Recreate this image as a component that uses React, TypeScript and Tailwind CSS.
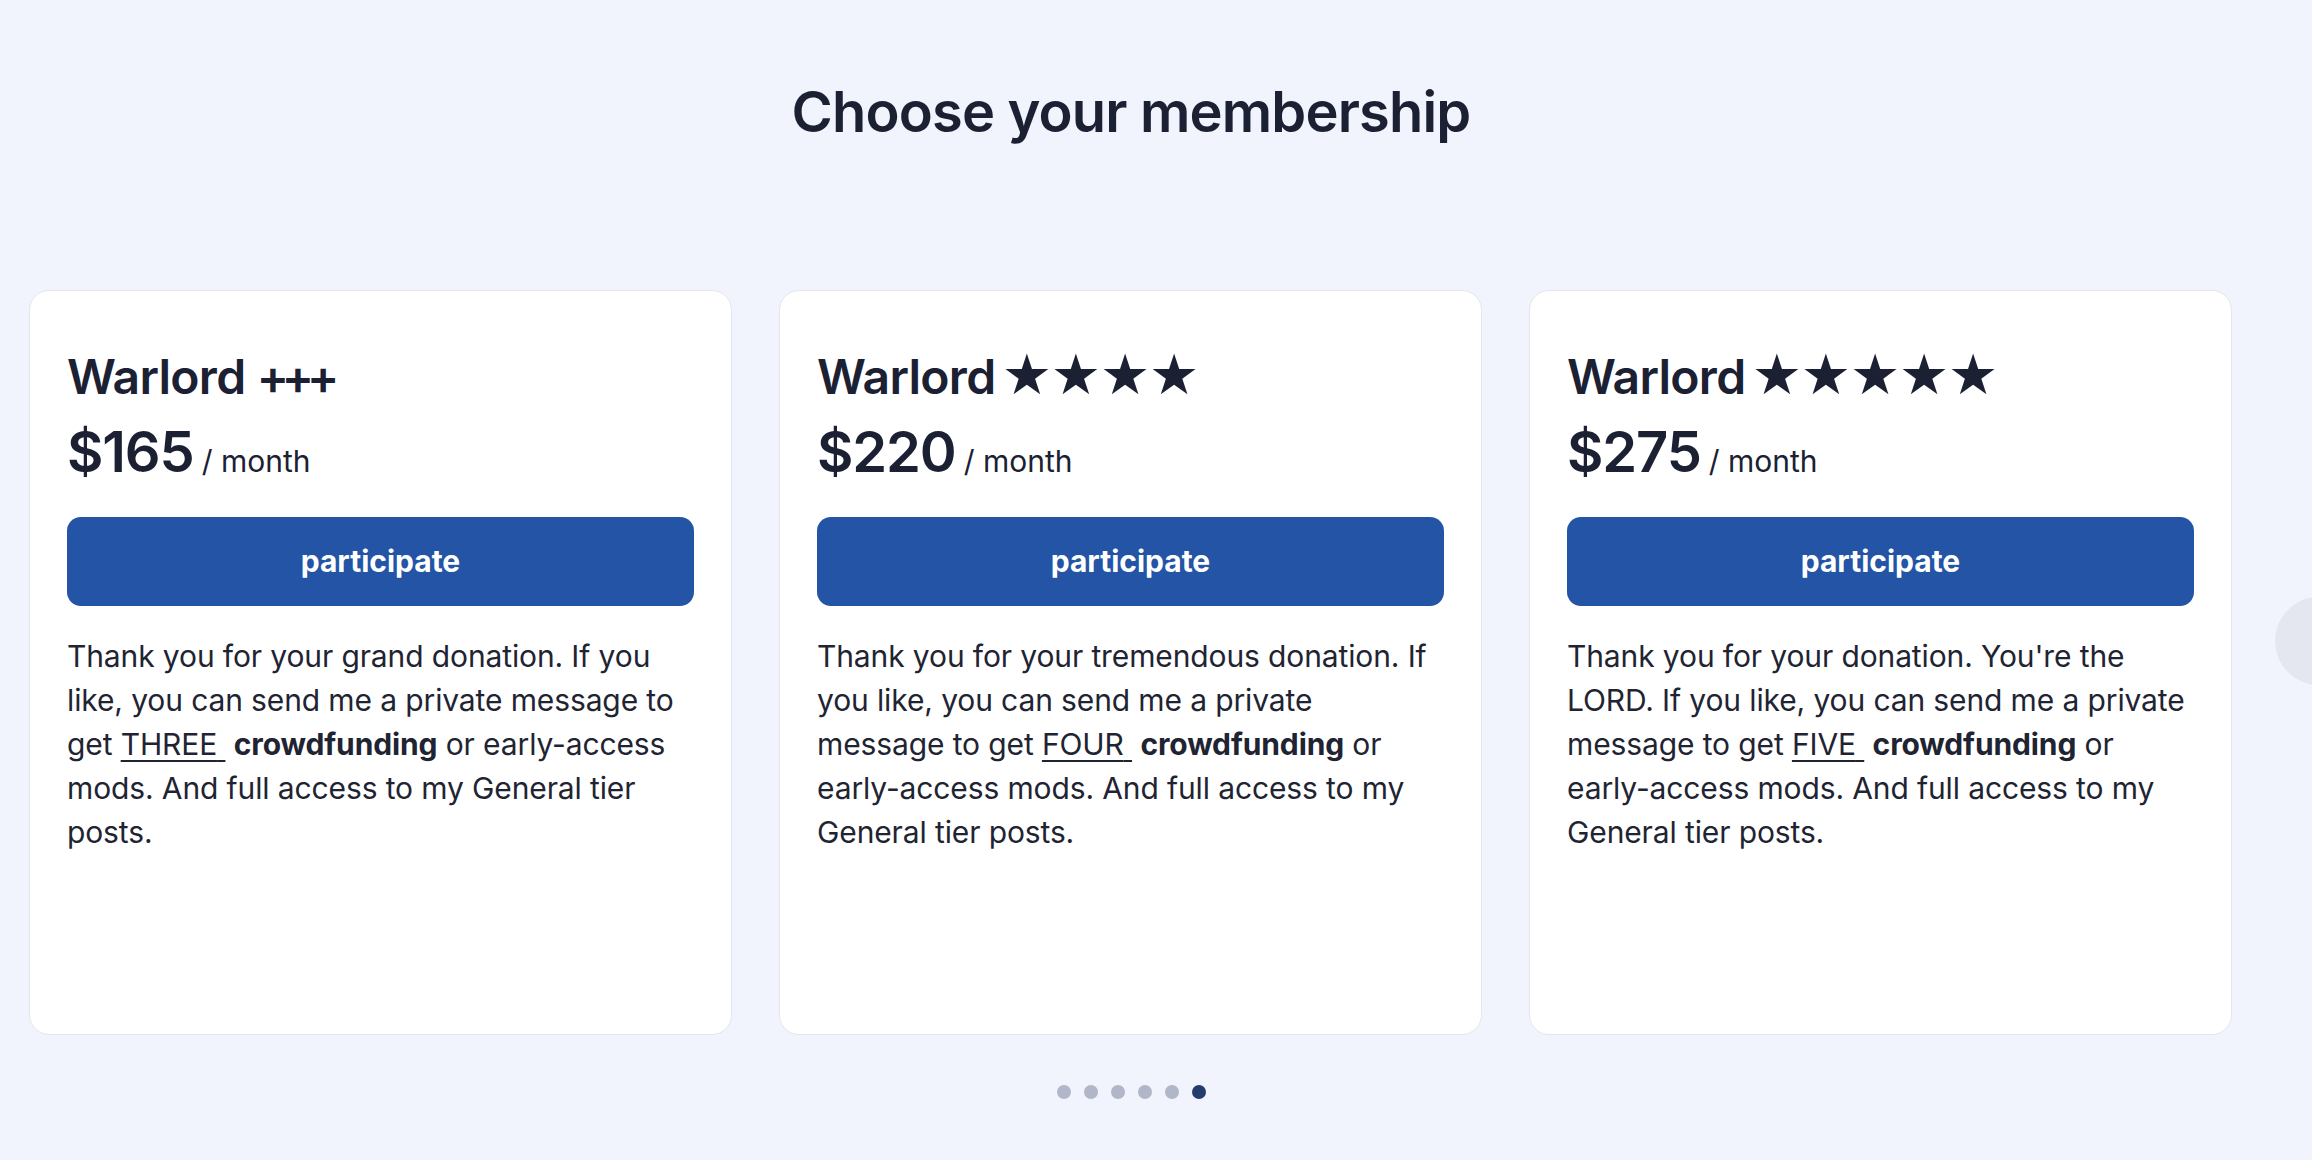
const tiers = [
  {
    name: 'Warlord',
    suffix: '+++',
    stars: 0,
    price: '$165',
    lead: 'Thank you for your grand donation. If you like, you can send me a private message to get ',
    count: 'THREE',
  },
  {
    name: 'Warlord',
    suffix: '',
    stars: 4,
    price: '$220',
    lead: 'Thank you for your tremendous donation. If you like, you can send me a private message to get ',
    count: 'FOUR',
  },
  {
    name: 'Warlord',
    suffix: '',
    stars: 5,
    price: '$275',
    lead: "Thank you for your donation. You're the LORD. If you like, you can send me a private message to get ",
    count: 'FIVE',
  },
];

const TierCard = ({ tier }: { tier: (typeof tiers)[number] }) => {
  return (
    <div className="w-[703px] h-[745px] shrink-0 rounded-[20px] border border-[#e4e6ec] bg-white px-[37px] pt-[57px]">
      <h3 className="h-[58px] text-[48px] leading-[58px] font-semibold text-[#1b2133] tracking-[-0.015em] whitespace-nowrap">
        {tier.name}{' '}
        {tier.suffix && <span className="tracking-[-0.15em]">{tier.suffix}</span>}
        {tier.stars > 0 && (
          <span className="-ml-[5px] font-['DejaVu_Sans',sans-serif] text-[56px] leading-[0] font-normal tracking-[-0.02em]">
            {'★'.repeat(tier.stars)}
          </span>
        )}
      </h3>
      <div className="mt-[18px] flex items-baseline text-[#1b2133]">
        <span className="text-[56px] leading-[56px] font-semibold tracking-[-0.02em]">{tier.price}</span>
        <span className="ml-2 text-[30px] leading-[56px]">/ month</span>
      </div>
      <button className="mt-[28px] h-[89px] w-full rounded-[14px] bg-[#2354a5] text-[30px] font-bold text-white">
        participate
      </button>
      <p className="mt-[28px] text-[30px] leading-[44px] text-[#1f2433] tracking-[-0.004em]">
        {tier.lead}
        <span className="underline underline-offset-[5px] decoration-[1.5px]">{tier.count}&nbsp;</span>{' '}
        <span className="font-bold">crowdfunding</span> or early-access mods. And full access to my General tier posts.
      </p>
    </div>
  );
};

export default function App() {
  return (
    <div className="relative min-h-screen w-full overflow-hidden bg-[#f1f4fc] font-['Inter',sans-serif]">
      <div className="w-[2262px] px-[29px]">
        <h1 className="pt-[79px] text-center text-[56px] leading-[67px] font-semibold tracking-[-0.015em] text-[#1b2133]">
          Choose your membership
        </h1>
        <div className="mt-[144px] flex gap-[47px]">
          {tiers.map((t) => (
            <TierCard key={t.price} tier={t} />
          ))}
        </div>
        <div className="mt-[50px] flex justify-center gap-[13px]">
          {[0, 1, 2, 3, 4, 5].map((i) => (
            <span
              key={i}
              className={i === 5 ? 'h-[14px] w-[14px] rounded-full bg-[#233c6b]' : 'h-[14px] w-[14px] rounded-full bg-[#b1b6c8]'}
            />
          ))}
        </div>
      </div>
      <div className="absolute left-[2275px] top-[597px] h-[88px] w-[88px] rounded-full bg-[#e4e7ef]" />
    </div>
  );
}
